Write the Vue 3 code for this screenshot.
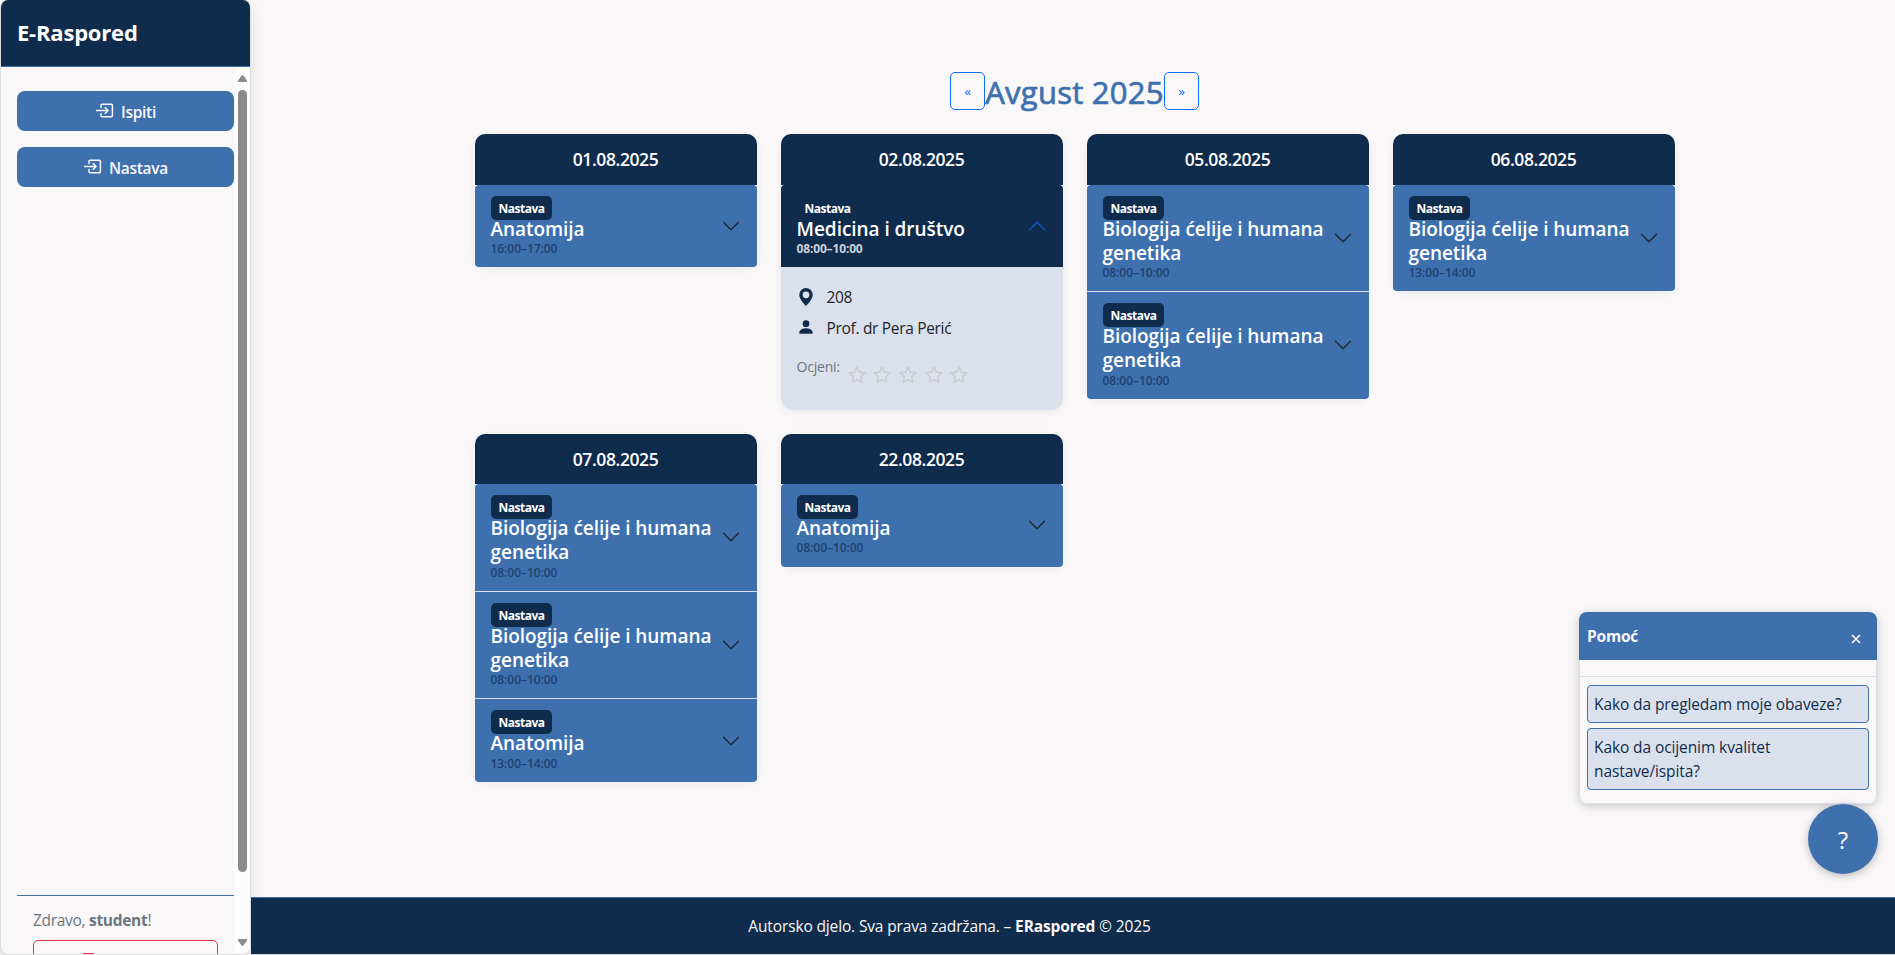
<script setup>
const L = 'Biologija ćelije i humana genetika'
const days = [
  { date: '01.08.2025', items: [{ title: 'Anatomija', time: '16:00–17:00' }] },
  { date: '02.08.2025', items: [{ title: 'Medicina i društvo', time: '08:00–10:00', open: true, room: '208', prof: 'Prof. dr Pera Perić' }] },
  { date: '05.08.2025', items: [{ title: L, time: '08:00–10:00' }, { title: L, time: '08:00–10:00' }] },
  { date: '06.08.2025', items: [{ title: L, time: '13:00–14:00' }] },
  { date: '07.08.2025', items: [{ title: L, time: '08:00–10:00' }, { title: L, time: '08:00–10:00' }, { title: 'Anatomija', time: '13:00–14:00' }] },
  { date: '22.08.2025', items: [{ title: 'Anatomija', time: '08:00–10:00' }] }
]
const links = ['Ispiti', 'Nastava']
</script>

<template>
  <div class="page">
    <aside class="sidebar">
      <div class="brand"><span>E-Raspored</span></div>
      <div class="side-body">
        <div class="side-content">
          <button v-for="l in links" :key="l" class="nav-btn">
            <svg width="18" height="18" viewBox="0 0 18 18" fill="none" stroke="currentColor" stroke-width="1.5">
              <path d="M5 6V3.2Q5 2.2 6 2.2H15.4Q16.4 2.2 16.4 3.2V13.8Q16.4 14.8 15.4 14.8H6Q5 14.8 5 13.8V11" />
              <path d="M0 8.5H12M8.8 5.2L12.1 8.5L8.8 11.8" />
            </svg>
            <span>{{ l }}</span>
          </button>
          <div class="user">
            <div class="hello">Zdravo, <b>student</b>!</div>
            <div class="logout"><i></i></div>
          </div>
        </div>
        <div class="scrollbar">
          <svg width="9" height="7" viewBox="0 0 9 7"><path d="M0 7V5.6L3.4 .8Q4.5-.5 5.6 .8L9 5.6V7Z" fill="#8b8b8b" /></svg>
          <div class="thumb"></div>
          <svg width="9" height="7" viewBox="0 0 9 7"><path d="M0 0V1.4L3.4 6.2Q4.5 7.5 5.6 6.2L9 1.4V0Z" fill="#8b8b8b" /></svg>
        </div>
      </div>
    </aside>

    <div class="main">
      <main class="content">
        <div class="month">
          <button>«</button>
          <h2>Avgust 2025</h2>
          <button>»</button>
        </div>
        <div class="grid">
          <section v-for="d in days" :key="d.date" class="day">
            <div class="date">{{ d.date }}</div>
            <div class="items">
              <template v-for="(it, i) in d.items" :key="i">
                <div class="item" :class="{ open: it.open }">
                  <div class="info">
                    <span class="badge">Nastava</span>
                    <div class="title">{{ it.title }}</div>
                    <div class="time">{{ it.time }}</div>
                  </div>
                  <svg class="chev" width="20" height="20" viewBox="0 0 16 16" fill="none" stroke="currentColor" stroke-linecap="round" stroke-linejoin="round">
                    <path :d="it.open ? 'M2 11L8 5L14 11' : 'M2 5L8 11L14 5'" />
                  </svg>
                </div>
                <div v-if="it.open" class="details">
                  <div class="row">
                    <svg width="18" height="18" viewBox="0 0 16 16" fill="currentColor"><path fill-rule="evenodd" d="M8 16s6-5.686 6-10A6 6 0 0 0 2 6c0 4.314 6 10 6 10m0-7a3 3 0 1 1 0-6 3 3 0 0 1 0 6" /></svg>
                    <span>{{ it.room }}</span>
                  </div>
                  <div class="row">
                    <svg class="person" width="18" height="18" viewBox="0 0 16 16" fill="currentColor"><path d="M3 14s-1 0-1-1 1-4 6-4 6 3 6 4-1 1-1 1zm5-6a3 3 0 1 0 0-6 3 3 0 0 0 0 6" /></svg>
                    <span>{{ it.prof }}</span>
                  </div>
                  <div class="rate">
                    <span>Ocjeni:</span>
                    <div class="stars">
                      <svg v-for="n in 5" :key="n" width="18" height="18" viewBox="0 0 18 18" fill="none" stroke="#cbcbcb" stroke-width="1.6" stroke-linejoin="round">
                        <path d="M9 1.2L11.3 6.1L16.9 6.9L12.9 10.7L13.8 16.3L9 13.7L4.2 16.3L5.1 10.7L1.1 6.9L6.7 6.1Z" />
                      </svg>
                    </div>
                  </div>
                </div>
              </template>
            </div>
          </section>
        </div>
      </main>
      <footer class="footer"><span>Autorsko djelo. Sva prava zadržana. – <b>ERaspored</b> © 2025</span></footer>
    </div>

    <div class="help">
      <div class="help-head">
        <b>Pomoć</b>
        <svg width="10" height="10" viewBox="0 0 10 10" stroke="#f9f7f8" stroke-width="1.7"><path d="M1 1L9 9M9 1L1 9" /></svg>
      </div>
      <div class="help-gap"></div>
      <div class="options">
        <div class="opt">Kako da pregledam moje obaveze?</div>
        <div class="opt">Kako da ocijenim kvalitet nastave/ispita?</div>
      </div>
    </div>
    <button class="fab">?</button>
  </div>
</template>

<style>
body { margin: 0; overflow: hidden; background: #f9f7f8; }
</style>

<style scoped>
* { box-sizing: border-box; }
.page {
  position: relative; display: flex; width: 1895px; height: 955px;
  background: #f9f7f8; font-family: "Open Sans", "Noto Sans", sans-serif;
  font-size: 16px; line-height: 24px; color: #212529; overflow: hidden;
}
button { font-family: inherit; padding: 0; }
.sidebar {
  width: 251px; height: 955px; flex: none; display: flex; flex-direction: column;
  border: 1px solid #dddcdd; border-top: 0; border-radius: 8px; overflow: hidden;
  box-shadow: 0 8px 16px rgba(0, 0, 0, .11); background: #f9f7f8;
}
.brand {
  height: 67px; flex: none; background: #102c4c; border-bottom: 1px solid #3e70ae;
  padding: 0 0 2px 16px; display: flex; align-items: center;
  color: #fff; font-weight: 700; font-size: 22px; letter-spacing: -.2px;
}
.side-body { flex: 1; min-height: 0; display: flex; }
.side-content { width: 234px; padding: 24px 1px 0 16px; display: flex; flex-direction: column; overflow: hidden; }
.nav-btn {
  height: 40px; flex: none; border: 0; border-radius: 8px; background: #3e70ae; color: #f9f7f8; margin-bottom: 16px;
  display: flex; align-items: center; justify-content: center; gap: 7px; padding-left: 1px;
  font-size: 15.5px; font-weight: 600; letter-spacing: -.3px;
}
.nav-btn span { padding-top: 2px; }
.user { margin-top: auto; border-top: 1px solid #3e70ae; padding: 12px 16px 0; height: 59px; flex: none; }
.hello { color: #6c757d; line-height: 24px; letter-spacing: -.3px; font-size: 15.5px; }
.logout { height: 38px; margin-top: 8px; border: 1px solid #dc3545; border-radius: 5px; padding: 12px 0 0 49px; }
.logout i { display: block; width: 11px; height: 2px; background: #dc3545; border-radius: 1px; }
.scrollbar { flex: 1; background: #fcfcfc; display: flex; flex-direction: column; align-items: center; padding: 8px 0 8px; }
.thumb { width: 9px; flex: 1; margin: 8px 0 67px; border-radius: 5px; background: #8b8b8b; }

.main { flex: 1; display: flex; flex-direction: column; border-bottom: 1px solid #d8d8da; }
.content { flex: 1; padding: 72px 0 0 224px; }
.month { width: 1199px; display: flex; justify-content: center; height: 38px; }
.month button {
  width: 35px; height: 38px; border: 1px solid #0d6efd; border-radius: 5px; background: none;
  color: #0d6efd; font-size: 13.5px; flex: none;
}
.month h2 {
  margin: 0; width: 179px; font-size: 31px; line-height: 40px; font-weight: 400; color: #3e70ae;
  letter-spacing: .25px; white-space: nowrap; text-align: center; -webkit-text-stroke: .7px #3e70ae;
}
.grid { margin-top: 24px; display: grid; grid-template-columns: repeat(4, 282px); gap: 24px; align-items: start; }
.day { border-radius: 12px; box-shadow: 0 2px 8px rgba(0, 0, 0, .06); }
.date {
  height: 50.6px; background: #102c4c; color: #fff; border-radius: 10px 10px 0 0; text-align: center;
  line-height: 51px; font-size: 17.5px; font-weight: 600; letter-spacing: -.4px; padding-right: 1px;
}
.item {
  display: flex; align-items: center; justify-content: space-between; padding: 11.1px 16px;
  background: #3e70ae; color: #1f2937;
}
.item + .item { border-top: 1px solid #dbe1ec; }
.item:first-child { border-radius: 4px 4px 0 0; }
.item:last-child { border-bottom-left-radius: 4px; border-bottom-right-radius: 4px; }
.item.open { background: #102c4c; }
.info { width: 230px; flex: none; }
.badge {
  display: block; width: 61px; height: 24px; border-radius: 5px; background: #102c4c; color: #fff;
  text-align: center; font-size: 12px; line-height: 25px; font-weight: 700; letter-spacing: -.5px;
}
.title { margin: -3px 0 0 -.5px; line-height: 24.2px; font-size: 19px; font-weight: 600; color: #fff; letter-spacing: -.05px; }
.time { margin-left: -.5px; font-size: 12px; line-height: 15px; font-weight: 600; letter-spacing: -.05px; color: #1f4270; }
.open .time { color: #cbd1da; font-weight: 700; letter-spacing: -.15px; }
.chev { flex: none; margin-left: -4px; color: #212529; }
.open .chev { color: #0a58ca; }
.details { height: 142.6px; background: #dbe1ec; border-radius: 0 0 12px 12px; padding: 18px 16px 0 15.5px; }
.row { display: flex; align-items: center; gap: 12px; height: 24px; margin-bottom: 7px; color: #212529; font-size: 15.5px; letter-spacing: -.32px; }
.row svg { color: #102c4c; flex: none; }
.person { position: relative; top: -1px; }
.rate { display: flex; margin-top: 16px; color: #6c757d; font-size: 14px; line-height: 21px; letter-spacing: -.2px; }
.rate > span { width: 51px; flex: none; }
.stars { display: flex; gap: 7.7px; margin-top: 10px; }
.footer {
  height: 57px; background: #102c4c; border-top: 1px solid #3e70ae; color: #f9f7f8;
  display: flex; align-items: center; justify-content: center; padding-right: 247px;
  font-size: 15.5px; letter-spacing: -.14px;
}
.help {
  position: absolute; left: 1579px; top: 612px; width: 298px; height: 192px; border-radius: 8px; overflow: hidden;
  background: #f9f7f8; box-shadow: 0 2px 10px rgba(0, 0, 0, .2), inset 0 0 0 1px #dbe1ec;
}
.help-head {
  height: 48px; background: #3e70ae; color: #f9f7f8; display: flex; justify-content: space-between; align-items: center;
  padding: 0 16px 0 8px; font-size: 15.5px; letter-spacing: -.2px;
}
.help-head svg { margin-top: 5px; }
.help-gap { height: 17px; border-bottom: 1px solid #dbe1ec; }
.options { padding: 8px; display: flex; flex-direction: column; gap: 5px; }
.opt {
  border: 1px solid #3e70ae; border-radius: 4px; background: #dbe1ec; color: #102c4c; padding: 6px 6px;
  font-size: 15.5px; letter-spacing: -.1px;
}
.fab {
  position: absolute; left: 1808px; top: 804px; width: 70px; height: 70px; border-radius: 50%; border: 0;
  background: #3e70ae; color: #f9f7f8; font-size: 24px; line-height: 71px; box-shadow: 0 2px 8px rgba(0, 0, 0, .25);
}
</style>
